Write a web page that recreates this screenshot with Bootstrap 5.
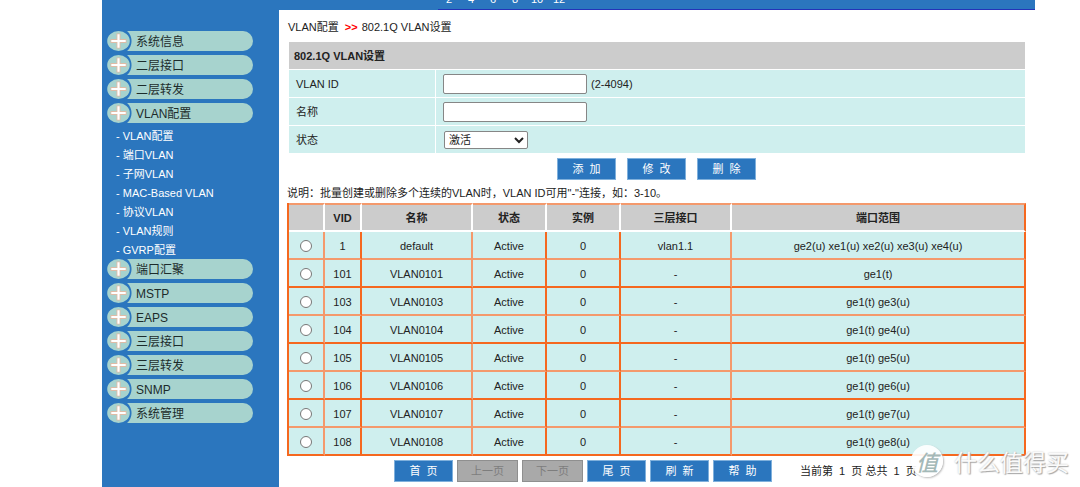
<!DOCTYPE html>
<html lang="zh-CN">
<head>
<meta charset="utf-8">
<meta name="viewport" content="width=device-width, initial-scale=1">
<title>802.1Q VLAN设置</title>
<link rel="stylesheet" href="https://cdn.jsdelivr.net/npm/bootstrap@5.3.0/dist/css/bootstrap.min.css">
<style>
  :root { --brand: #2b76be; --pill: #a7d3ce; --cell: #cfefee; --head: #cccccc; --line: #f4996c; --line-strong: #f5681f; }
  body { font-family: "Liberation Sans", "Noto Sans CJK SC", sans-serif; font-size: 11px; line-height: 16px; color: #222; background: #fff; }
  .shell { padding-left: 102px; padding-right: 45px; }
  .topbar { height: 10px; background: var(--brand); }
  .ports { margin-left: 336px; padding-bottom: 4px; border-bottom: 1px solid #2433b8; color: #fff; line-height: 12px; height: 10px; }
  .ports span { width: 22px; }
  .side { width: 177px; background: var(--brand); padding: 19px 26px 0 5px; }
  .side-link { height: 24px; color: #1c2b2b; font-size: 12px; }
  .side-link svg { width: 23px; height: 20px; flex: none; }
  .pill { height: 20px; line-height: 22px; margin-left: -3px; padding-left: 9px; border-radius: 0 10px 10px 0;
    background: radial-gradient(circle at -9px 50%, transparent 13px, var(--pill) 14px); }
  .sub { margin: 2px 0 -3px; padding-left: 9px; }
  .sub a { color: #fff; line-height: 19px; }
  .content { padding: 9px 9px 4px 8px; }
  .crumb { margin-bottom: 7px; padding-left: 1px; }
  .arrows { color: #f00; margin: 0 4px 0 3px; }
  .form-grid { margin-left: 2px; width: calc(100% - 3px); border-collapse: separate; border-spacing: 0; }
  .form-grid th, .form-grid td { height: 28px; padding: 0 7px; border-bottom: 1px solid #fff; background: var(--cell); font-weight: 400; }
  .form-grid thead th { background: var(--head); font-weight: 700; padding-left: 5px; }
  .form-grid tbody th { width: 147px; border-right: 1px solid #fff; }
  .form-grid .form-control { width: 144px; height: 20px; min-height: 0; padding: 0 3px; font-size: 11px; border: 1px solid #868686; border-radius: 2px; }
  .form-grid .form-select { width: 84px; height: 18px; padding: 0 20px 0 4px; margin-left: 1px; font-size: 11px; line-height: 16px; color: #222; border: 1px solid #868686; border-radius: 2px; background-size: 12px 12px; background-position: right 2px center;
    background-image: url("data:image/svg+xml,%3Csvg xmlns='http://www.w3.org/2000/svg' viewBox='0 0 12 12'%3E%3Cpath d='M2 4l4 4 4-4' fill='none' stroke='%23222' stroke-width='2'/%3E%3C/svg%3E"); }
  .actions { gap: 11px; padding-top: 4px; }
  .act { width: 59px; height: 22px; padding: 0; font-size: 11px; line-height: 20px; border-radius: 0; color: #fff; background: var(--brand); border: 1px solid #7fb0dc; }
  .act:hover { color: #fff; background: #1f65aa; }
  .act:disabled { width: 61px; color: #7d7d7d; background: #a9a9a9; border: 1px solid #8f8f8f; opacity: 1; }
  .hint { margin: 0; padding: 5px 0 2px; }
  .vlans { table-layout: fixed; border-collapse: separate; border-spacing: 0; border-left: 2px solid var(--line-strong); text-align: center; }
  .vlans th, .vlans td { height: 28px; padding: 1px 0 0; border-right: 2px solid var(--line); border-bottom: 2px solid var(--line); background: var(--cell); }
  .vlans th { height: 29px; background: var(--head); border-color: #fff; border-top: 2px solid var(--line); }
  .vlans tr:nth-child(even) td { border-bottom-color: var(--line-strong); }
  .vlans td:nth-child(2), .vlans td:nth-child(4), .vlans td:nth-child(5), .vlans tr > :last-child { border-right-color: var(--line-strong); }
  .vlans .form-check-input { display: block; width: 12px; height: 12px; margin: 0 auto; border: 1px solid #777; }
  .c-pick { width: 36px; } .c-vid { width: 37px; } .c-name, .c-l3 { width: 111px; } .c-state, .c-inst { width: 74px; }
  .pager { padding: 4px 0 0 107px; gap: 4px; }
  .pager .tally { margin-left: 24px; white-space: pre; }
  .stamp { right: 11px; bottom: 9px; pointer-events: none; color: #fafafa; font-family: "Noto Sans CJK SC", sans-serif; font-size: 23px; line-height: 34px; text-shadow: 1px 1px 1px #a5a5a5, 0 0 2px #c4c4c4; }
  .seal { width: 32px; height: 32px; background: rgba(255,255,255,.92); box-shadow: 1px 1px 2px #bbb; color: #a4b9b8; font-size: 22px; font-weight: 500; font-style: italic; text-shadow: none; margin-right: 11px; }
</style>
</head>
<body>
<svg class="d-none" xmlns="http://www.w3.org/2000/svg">
  <symbol id="plus" viewBox="0 0 23 20">
    <ellipse cx="11.5" cy="10" rx="11.3" ry="10" fill="#a7d3ce"/>
    <path d="M11.5 2.5v15M3.5 10h16" stroke="#dfbba5" stroke-width="4"/>
    <path d="M11.5 3.3v13.4M4.3 10h14.4" stroke="#fff" stroke-width="2.2"/>
  </symbol>
</svg>
<div class="shell d-flex flex-column min-vh-100 position-relative">
  <header class="topbar overflow-hidden">
    <div class="ports d-flex align-items-end text-center">
      <span>2</span><span>4</span><span>6</span><span>8</span><span>10</span><span>12</span>
    </div>
  </header>
  <div class="d-flex flex-grow-1">
    <nav class="side flex-shrink-0">
      <a href="#" class="side-link d-flex align-items-center text-decoration-none"><svg><use href="#plus"/></svg><span class="pill flex-grow-1">系统信息</span></a>
      <a href="#" class="side-link d-flex align-items-center text-decoration-none"><svg><use href="#plus"/></svg><span class="pill flex-grow-1">二层接口</span></a>
      <a href="#" class="side-link d-flex align-items-center text-decoration-none"><svg><use href="#plus"/></svg><span class="pill flex-grow-1">二层转发</span></a>
      <a href="#" class="side-link d-flex align-items-center text-decoration-none"><svg><use href="#plus"/></svg><span class="pill flex-grow-1">VLAN配置</span></a>
      <ul class="sub list-unstyled">
        <li><a href="#" class="d-block text-decoration-none">- VLAN配置</a></li>
        <li><a href="#" class="d-block text-decoration-none">- 端口VLAN</a></li>
        <li><a href="#" class="d-block text-decoration-none">- 子网VLAN</a></li>
        <li><a href="#" class="d-block text-decoration-none">- MAC-Based VLAN</a></li>
        <li><a href="#" class="d-block text-decoration-none">- 协议VLAN</a></li>
        <li><a href="#" class="d-block text-decoration-none">- VLAN规则</a></li>
        <li><a href="#" class="d-block text-decoration-none">- GVRP配置</a></li>
      </ul>
      <a href="#" class="side-link d-flex align-items-center text-decoration-none"><svg><use href="#plus"/></svg><span class="pill flex-grow-1">端口汇聚</span></a>
      <a href="#" class="side-link d-flex align-items-center text-decoration-none"><svg><use href="#plus"/></svg><span class="pill flex-grow-1">MSTP</span></a>
      <a href="#" class="side-link d-flex align-items-center text-decoration-none"><svg><use href="#plus"/></svg><span class="pill flex-grow-1">EAPS</span></a>
      <a href="#" class="side-link d-flex align-items-center text-decoration-none"><svg><use href="#plus"/></svg><span class="pill flex-grow-1">三层接口</span></a>
      <a href="#" class="side-link d-flex align-items-center text-decoration-none"><svg><use href="#plus"/></svg><span class="pill flex-grow-1">三层转发</span></a>
      <a href="#" class="side-link d-flex align-items-center text-decoration-none"><svg><use href="#plus"/></svg><span class="pill flex-grow-1">SNMP</span></a>
      <a href="#" class="side-link d-flex align-items-center text-decoration-none"><svg><use href="#plus"/></svg><span class="pill flex-grow-1">系统管理</span></a>
    </nav>
    <main class="content flex-grow-1">
      <div class="crumb">VLAN配置 <b class="arrows">&gt;&gt;</b>802.1Q VLAN设置</div>
      <form>
        <table class="form-grid">
          <thead><tr><th colspan="2">802.1Q VLAN设置</th></tr></thead>
          <tbody>
            <tr><th><label for="vid">VLAN ID</label></th><td><div class="d-flex align-items-center"><input id="vid" type="text" class="form-control"><span class="ms-1">(2-4094)</span></div></td></tr>
            <tr><th><label for="vname">名称</label></th><td><input id="vname" type="text" class="form-control"></td></tr>
            <tr><th><label for="vstate">状态</label></th><td><select id="vstate" class="form-select"><option>激活</option><option>挂起</option></select></td></tr>
          </tbody>
        </table>
        <div class="actions d-flex justify-content-center">
          <button type="button" class="btn act">添&nbsp;&nbsp;加</button>
          <button type="button" class="btn act">修&nbsp;&nbsp;改</button>
          <button type="button" class="btn act">删&nbsp;&nbsp;除</button>
        </div>
      </form>
      <p class="hint">说明：批量创建或删除多个连续的VLAN时，VLAN ID可用"-"连接，如：3-10。</p>
      <table class="vlans w-100">
        <colgroup><col class="c-pick"><col class="c-vid"><col class="c-name"><col class="c-state"><col class="c-inst"><col class="c-l3"><col></colgroup>
        <thead><tr><th></th><th>VID</th><th>名称</th><th>状态</th><th>实例</th><th>三层接口</th><th>端口范围</th></tr></thead>
        <tbody>
          <tr><td><input type="radio" name="row" class="form-check-input" aria-label="1"></td><td>1</td><td>default</td><td>Active</td><td>0</td><td>vlan1.1</td><td>ge2(u) xe1(u) xe2(u) xe3(u) xe4(u)</td></tr>
          <tr><td><input type="radio" name="row" class="form-check-input" aria-label="101"></td><td>101</td><td>VLAN0101</td><td>Active</td><td>0</td><td>-</td><td>ge1(t)</td></tr>
          <tr><td><input type="radio" name="row" class="form-check-input" aria-label="103"></td><td>103</td><td>VLAN0103</td><td>Active</td><td>0</td><td>-</td><td>ge1(t) ge3(u)</td></tr>
          <tr><td><input type="radio" name="row" class="form-check-input" aria-label="104"></td><td>104</td><td>VLAN0104</td><td>Active</td><td>0</td><td>-</td><td>ge1(t) ge4(u)</td></tr>
          <tr><td><input type="radio" name="row" class="form-check-input" aria-label="105"></td><td>105</td><td>VLAN0105</td><td>Active</td><td>0</td><td>-</td><td>ge1(t) ge5(u)</td></tr>
          <tr><td><input type="radio" name="row" class="form-check-input" aria-label="106"></td><td>106</td><td>VLAN0106</td><td>Active</td><td>0</td><td>-</td><td>ge1(t) ge6(u)</td></tr>
          <tr><td><input type="radio" name="row" class="form-check-input" aria-label="107"></td><td>107</td><td>VLAN0107</td><td>Active</td><td>0</td><td>-</td><td>ge1(t) ge7(u)</td></tr>
          <tr><td><input type="radio" name="row" class="form-check-input" aria-label="108"></td><td>108</td><td>VLAN0108</td><td>Active</td><td>0</td><td>-</td><td>ge1(t) ge8(u)</td></tr>
        </tbody>
      </table>
      <div class="pager d-flex align-items-center">
        <button type="button" class="btn act">首&nbsp;&nbsp;页</button>
        <button type="button" class="btn act" disabled>上一页</button>
        <button type="button" class="btn act" disabled>下一页</button>
        <button type="button" class="btn act">尾&nbsp;&nbsp;页</button>
        <button type="button" class="btn act">刷&nbsp;&nbsp;新</button>
        <button type="button" class="btn act">帮&nbsp;&nbsp;助</button>
        <span class="tally">当前第  1  页 总共  1  页</span>
      </div>
    </main>
  </div>
  <div class="stamp position-absolute d-flex align-items-center"><span class="seal rounded-circle d-flex align-items-center justify-content-center">值</span>什么值得买</div>
</div>
<script src="https://cdn.jsdelivr.net/npm/bootstrap@5.3.0/dist/js/bootstrap.bundle.min.js"></script>
</body>
</html>
